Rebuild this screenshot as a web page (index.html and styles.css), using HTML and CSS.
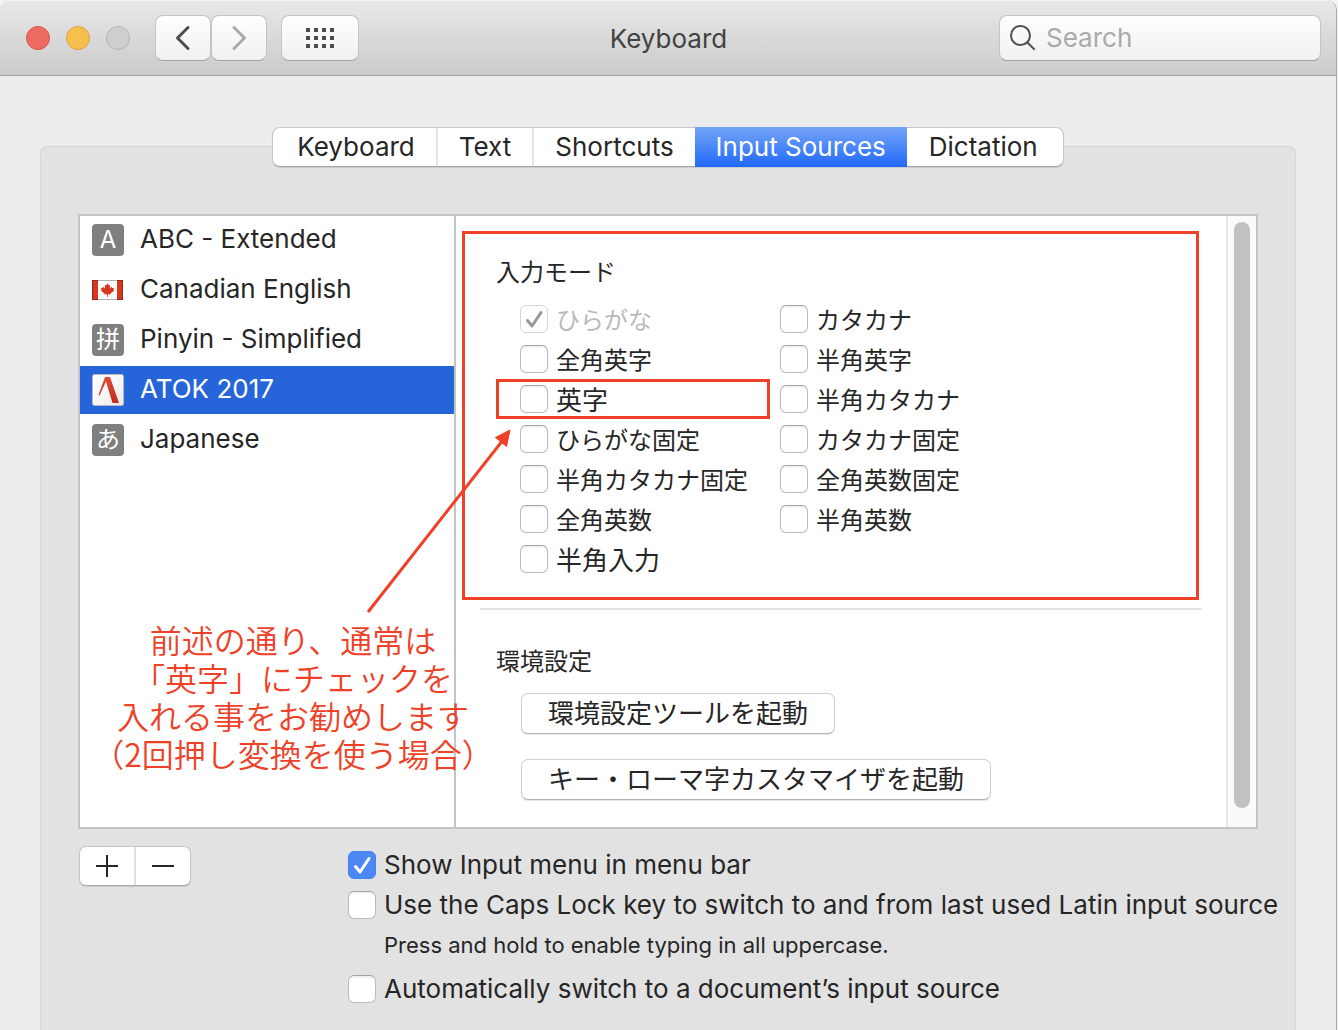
FILE: index.html
```html
<!DOCTYPE html>
<html lang="en">
<head>
<meta charset="utf-8">
<title>Keyboard</title>
<meta name="viewport" content="width=device-width, initial-scale=1">
<link rel="stylesheet" href="styles.css">
</head>
<body>
<div class="window">
  <header class="titlebar">
    <div class="titlebar-left">
      <div class="lights">
        <button class="light light-close" type="button" aria-label="Close"></button>
        <button class="light light-min" type="button" aria-label="Minimize"></button>
        <button class="light light-zoom" type="button" aria-label="Zoom" disabled></button>
      </div>
      <div class="nav">
        <button class="tool" type="button" aria-label="Back">
          <svg width="16" height="26" viewBox="0 0 16 26"><path d="M13 2.500 2.500 13 13 23.500" fill="none" stroke="#4d4d4d" stroke-width="3" stroke-linecap="round" stroke-linejoin="round"/></svg>
        </button>
        <button class="tool" type="button" aria-label="Forward">
          <svg width="16" height="26" viewBox="0 0 16 26"><path d="M3 2.500 13.500 13 3 23.500" fill="none" stroke="#a9a9a9" stroke-width="3" stroke-linecap="round" stroke-linejoin="round"/></svg>
        </button>
      </div>
      <button class="tool tool-wide" type="button" aria-label="Show all">
        <svg width="28" height="20" viewBox="0 0 28 20" fill="#4d4d4d"><path d="M0 0h4v4H0zM8 0h4v4H8zM16 0h4v4h-4zM24 0h4v4h-4zM0 8h4v4H0zM8 8h4v4H8zM16 8h4v4h-4zM24 8h4v4h-4zM0 16h4v4H0zM8 16h4v4H8zM16 16h4v4h-4zM24 16h4v4h-4z"/></svg>
      </button>
    </div>
    <h1 class="title">Keyboard</h1>
    <label class="search">
      <svg width="26" height="26" viewBox="0 0 26 26" fill="none" stroke="#505050" stroke-width="2"><circle cx="10.500" cy="10.500" r="9.500"/><path d="m17.200 17.200 7.500 7.500"/></svg>
      <input class="search-input" type="text" placeholder="Search" aria-label="Search">
    </label>
  </header>

  <main class="content">
    <nav class="tabs" aria-label="Sections">
      <button class="tab" type="button">Keyboard</button>
      <button class="tab" type="button">Text</button>
      <button class="tab" type="button">Shortcuts</button>
      <button class="tab tab-active" type="button">Input Sources</button>
      <button class="tab" type="button">Dictation</button>
    </nav>

    <section class="group">
      <div class="pane">
        <ul class="sources">
          <li class="source"><span class="badge">A</span><span class="source-name">ABC - Extended</span></li>
          <li class="source">
            <svg width="32" height="32" viewBox="0 0 32 32"><path d="M0 6h31v20H0z" fill="#b0b0b0"/><path d="M6 7h19v18H6z" fill="#fff"/><path d="M0 6h6v20H0zM25 6h6v20h-6z" fill="#8f2a1c"/><path d="M1 7h5v18H1zM25 7h5v18h-5z" fill="#d8361e"/><path d="m15.500 9 1.400 2.600 1.500-.7-.6 3.600 2-1.800.4 1.200 1.900-.2-.7 2 .9.700-3.900 3 .3 1.200-2.800-.4V23h-.8v-2.800l-2.800.4.300-1.200-3.900-3 .9-.7-.7-2 1.900.2.400-1.200 2 1.800-.6-3.600 1.500.7z" fill="#d8361e"/></svg>
            <span class="source-name">Canadian English</span>
          </li>
          <li class="source"><span class="badge" lang="zh-CN">拼</span><span class="source-name">Pinyin - Simplified</span></li>
          <li class="source source-active">
            <svg width="32" height="32" viewBox="0 0 32 32"><defs><linearGradient id="paper" x1="0" y1="0" x2="1" y2="1"><stop offset="0" stop-color="#fff"/><stop offset=".5" stop-color="#f7f7f7"/><stop offset="1" stop-color="#e8e8e8"/></linearGradient><linearGradient id="ink" x1="0" y1="0" x2="0" y2="1"><stop offset="0" stop-color="#e04a38"/><stop offset="1" stop-color="#c22d1a"/></linearGradient></defs><rect x=".5" y=".5" width="31" height="31" rx="2" fill="url(#paper)" stroke="#b9b9b9"/><path d="M13 3h5l9 26h-6.500L14 7.500 7.500 21.500l-1-.5z" fill="url(#ink)"/></svg>
            <span class="source-name">ATOK 2017</span>
          </li>
          <li class="source"><span class="badge" lang="ja">あ</span><span class="source-name">Japanese</span></li>
        </ul>

        <div class="detail" lang="ja">
          <section class="modes">
            <h2 class="heading">入力モード</h2>
            <div class="mode-columns">
              <div class="mode-column mode-column-first">
                <label class="check mode"><input class="box" type="checkbox" checked disabled><span class="muted">ひらがな</span></label>
                <label class="check mode"><input class="box" type="checkbox">全角英字</label>
                <label class="check mode mode-large mode-marked"><input class="box" type="checkbox">英字</label>
                <label class="check mode"><input class="box" type="checkbox">ひらがな固定</label>
                <label class="check mode"><input class="box" type="checkbox">半角カタカナ固定</label>
                <label class="check mode"><input class="box" type="checkbox">全角英数</label>
                <label class="check mode mode-large"><input class="box" type="checkbox">半角入力</label>
              </div>
              <div class="mode-column">
                <label class="check mode"><input class="box" type="checkbox">カタカナ</label>
                <label class="check mode"><input class="box" type="checkbox">半角英字</label>
                <label class="check mode"><input class="box" type="checkbox">半角カタカナ</label>
                <label class="check mode"><input class="box" type="checkbox">カタカナ固定</label>
                <label class="check mode"><input class="box" type="checkbox">全角英数固定</label>
                <label class="check mode"><input class="box" type="checkbox">半角英数</label>
              </div>
            </div>
          </section>
          <hr class="rule">
          <section class="prefs">
            <h2 class="heading">環境設定</h2>
            <button class="push" type="button">環境設定ツールを起動</button>
            <button class="push" type="button">キー・ローマ字カスタマイザを起動</button>
          </section>
        </div>
        <div class="scrollbar"><div class="thumb"></div></div>

        <svg class="arrow" width="150" height="190" viewBox="0 0 150 190"><path d="M4 186 139 14" stroke="#ee4128" stroke-width="3"/><path d="m146 4-3.500 16.500-11-9z" fill="#ee4128" stroke="#ee4128"/></svg>
        <p class="note" lang="ja">前述の通り、通常は<br>「英字」にチェックを<br>入れる事をお勧めします<br>（2回押し変換を使う場合）</p>
      </div>

      <div class="footer">
        <div class="add-remove">
          <button class="step" type="button" aria-label="Add"><svg width="24" height="24" viewBox="0 0 24 24"><path d="M12 1v22M1 12h22" stroke="#262626" stroke-width="2"/></svg></button>
          <button class="step" type="button" aria-label="Remove"><svg width="24" height="24" viewBox="0 0 24 24"><path d="M1 12h22" stroke="#262626" stroke-width="2"/></svg></button>
        </div>
        <div class="options">
          <label class="check option"><input class="box" type="checkbox" checked>Show Input menu in menu bar</label>
          <label class="check option"><input class="box" type="checkbox" aria-describedby="caps-hint">Use the Caps Lock key to switch to and from last used Latin input source</label>
          <p class="hint" id="caps-hint">Press and hold to enable typing in all uppercase.</p>
          <label class="check option"><input class="box" type="checkbox">Automatically switch to a document’s input source</label>
        </div>
      </div>
    </section>
  </main>
</div>
</body>
</html>
```
FILE: styles.css
```css
*, *::before, *::after { box-sizing: border-box; }

body {
  margin: 0;
  background: #f4f4f4;
  color: #262626;
  font: 26px/40px Inter, "Noto Sans CJK JP", sans-serif;
}

h1, h2, p, ul { margin: 0; padding: 0; font-weight: 400; }
button, input { font: inherit; color: inherit; padding: 0; border: 0; }
svg { display: block; flex: none; }

.window {
  display: flex;
  flex-direction: column;
  height: 100vh;
  min-width: 1300px;
  margin-right: 1px;
  overflow: hidden;
  background: #ececec;
  border-right: 1px solid #a8a8a8;
  border-radius: 10px 10px 0 0;
}

/* Title bar */
.titlebar {
  flex: none;
  display: grid;
  grid-template-columns: 1fr auto 1fr;
  align-items: center;
  height: 76px;
  padding: 0 15px 0 16px;
  background: linear-gradient(#e8e8e8, #cbcbcb);
  border-top: 1px solid #f2f2f2;
  border-bottom: 1px solid #a3a3a3;
}
.titlebar-left { display: flex; align-items: center; gap: 14px; padding-left: 10px; }
.lights { display: flex; gap: 16px; margin-right: 11px; }
.light { width: 24px; height: 24px; border-radius: 50%; border: 1px solid #b3b3b3; background: #cfcfcf; }
.light-close { background: #ed6b60; border-color: #d9544b; }
.light-min { background: #f5c04e; border-color: #dba23c; }
.nav { display: flex; }
.tool, .search {
  display: flex;
  align-items: center;
  justify-content: center;
  height: 46px;
  background: linear-gradient(#fefefe, #f1f1f1);
  border: 1px solid #c4c4c4;
  border-bottom-color: #a2a2a2;
  border-radius: 8px;
}
.tool { width: 56px; }
.tool-wide { width: 78px; }
.title { padding-top: 2px; font-size: 26px; color: #424242; }
.search { justify-self: end; width: 322px; padding: 0 10px; gap: 10px; }
.search-input { flex: 1; min-width: 0; background: none; outline: 0; }
.search-input::placeholder { color: #aaa; opacity: 1; }

/* Tabs straddle the top edge of the group */
.content { flex: 1; display: flex; flex-direction: column; padding: 51px 40px 0; }
.tabs {
  align-self: center;
  position: relative;
  z-index: 1;
  display: flex;
  height: 40px;
  background: #fff;
  border: 1px solid #c6c6c6;
  border-bottom-color: #a6a6a6;
  border-radius: 8px;
  box-shadow: 0 1px 1px #0000001a;
}
.tab { padding: 0 21px; background: none; border-left: 2px solid #e4e4e4; line-height: 38px; }
.tab:first-child { border-left: 0; padding-left: 24px; }
.tab:last-child { padding: 0 25px 0 22px; }
.tab-active, .tab-active + .tab { border-left: 0; }
.tab-active { margin: -1px 0; color: #fff; background: linear-gradient(#75a5f7, #2068f8); }

.group {
  flex: 1;
  margin-top: -21px;
  padding: 67px 37px 0;
  background: #e2e2e2;
  border: 1px solid #d5d5d5;
  border-bottom: 0;
  border-radius: 8px 8px 0 0;
}

.pane {
  position: relative;
  display: flex;
  background: #fff;
  border: 2px solid #c4c4c4;
}

/* Input source list */
.sources {
  flex: none;
  display: flex;
  flex-direction: column;
  gap: 2px;
  width: 376px;
  list-style: none;
  border-right: 2px solid #c4c4c4;
}
.source { display: flex; align-items: center; gap: 16px; height: 48px; padding-left: 12px; }
.source-active { background: #2565d9; color: #fff; }
.source-name { padding-bottom: 2px; }
.badge {
  width: 32px;
  height: 32px;
  border-radius: 4px;
  background: #7f7f7f;
  color: #fff;
  font-size: 24px;
  line-height: 32px;
  text-align: center;
}

/* Checkboxes */
.check { display: flex; align-items: center; gap: 8px; white-space: nowrap; }
.box {
  appearance: none;
  flex: none;
  width: 28px;
  height: 28px;
  margin: 0;
  background: #fff;
  border: 1px solid #bcbcbc;
  border-top-color: #a2a2a2;
  border-radius: 6px;
  box-shadow: inset 0 2px 2px #0000000f;
}
.box:checked {
  border-color: #4681f0;
  background: #4b88f6 url("data:image/svg+xml,%3Csvg xmlns='http://www.w3.org/2000/svg' viewBox='0 0 26 26'%3E%3Cpath d='m6.500 14.500 4.500 5.500L20 6.500' fill='none' stroke='%23fff' stroke-width='3' stroke-linecap='round' stroke-linejoin='round'/%3E%3C/svg%3E");
  box-shadow: none;
}
.box:disabled {
  border-color: #d6d6d6;
  background: #fff url("data:image/svg+xml,%3Csvg xmlns='http://www.w3.org/2000/svg' viewBox='0 0 26 26'%3E%3Cpath d='m6.500 14.500 4.500 5.500L20 6.500' fill='none' stroke='%23999' stroke-width='3' stroke-linecap='round' stroke-linejoin='round'/%3E%3C/svg%3E");
}
.muted { color: #bababa; }

/* Detail side */
.detail { flex: 1; min-width: 0; padding: 15px 24px 27px 6px; font-family: "Noto Sans CJK JP", sans-serif; }
.heading { font-size: 24px; line-height: 40px; }
.modes { margin-right: 3px; padding: 17px 31px 18px; border: 3px solid #ee4128; }
.mode-columns { display: flex; gap: 10px; padding-top: 8px; }
.mode-column-first { width: 274px; }
.mode { height: 40px; font-size: 24px; }
.mode-column-first .mode { padding-left: 21px; border: 3px solid transparent; }
.mode-column-first .mode-large { font-size: 26px; }
.mode-column-first .mode-marked { border-color: #ee4128; }
.rule { height: 2px; margin: 8px 0 0 18px; border: 0; background: #e4e4e4; }
.prefs { display: flex; flex-direction: column; align-items: flex-start; padding: 30px 0 0 34px; }
.push {
  height: 41px;
  margin: 13px 0 0 25px;
  padding: 0 26px;
  background: #fff;
  border: 1px solid #cfcfcf;
  border-bottom-color: #b4b4b4;
  border-radius: 7px;
  box-shadow: 0 1px 1px #0000001a;
  line-height: 32px;
  padding-bottom: 4px;
}
.push + .push { margin-top: 25px; }

.scrollbar { flex: none; width: 30px; padding: 6px 6px 19px; background: #fafafa; border-left: 2px solid #e8e8e8; }
.thumb { width: 16px; height: 100%; border-radius: 8px; background: #c1c1c1; }

/* Annotation over the pane */
.arrow { position: absolute; left: 284px; top: 210px; }
.note {
  position: absolute;
  left: 12px;
  top: 404px;
  width: 402px;
  color: #ee4128;
  font: 350 32px/38px "Noto Sans CJK JP", sans-serif;
  text-align: center;
  white-space: nowrap;
}

/* Below the pane */
.footer { display: flex; align-items: flex-start; gap: 157px; padding-top: 16px; }
.add-remove {
  display: flex;
  height: 40px;
  margin: 1px 0 0 1px;
  background: #fff;
  border: 1px solid #c4c4c4;
  border-bottom-color: #a6a6a6;
  border-radius: 7px;
  box-shadow: 0 1px 1px #0000001a;
}
.step { display: flex; align-items: center; justify-content: center; width: 54px; background: none; }
.step + .step { width: 56px; border-left: 2px solid #e0e0e0; }
.option { height: 40px; }
.hint { padding-left: 36px; font-size: 22px; line-height: 40px; margin-bottom: 4px; }
```
